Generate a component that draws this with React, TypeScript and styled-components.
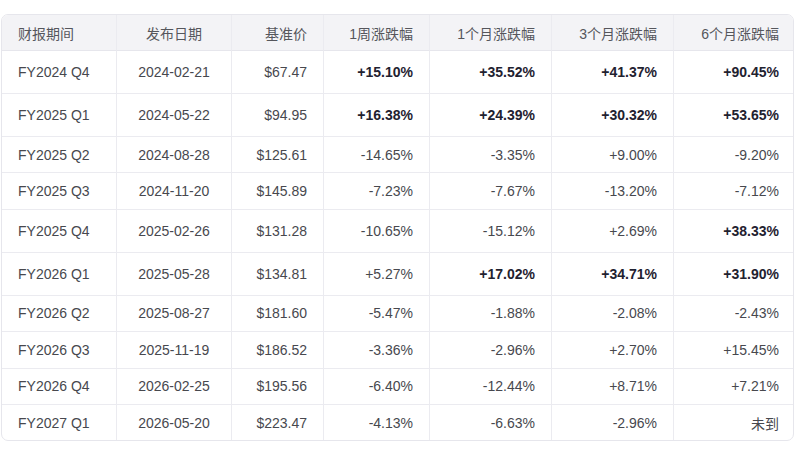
import React from 'react'
import styled, { createGlobalStyle } from 'styled-components'

const GlobalStyle = createGlobalStyle`
  html, body {
    margin: 0;
    padding: 0;
    background: #ffffff;
  }
  body {
    font-family: 'Liberation Sans', Arial, 'Noto Sans CJK SC', sans-serif;
  }
`

const Page = styled.div`
  padding: 14px 0 0 1px;
`

const Frame = styled.div`
  width: 793px;
  border: 1px solid #e6e6ec;
  border-radius: 7px;
  overflow: hidden;
  box-sizing: border-box;
`

const Table = styled.table`
  width: 100%;
  border-collapse: separate;
  border-spacing: 0;
  table-layout: fixed;
  font-size: 14px;
`

type Align = 'left' | 'center' | 'right'

const HeadCell = styled.th<{ $align: Align }>`
  height: 35px;
  padding: 0 16px;
  background: #f3f3f6;
  color: #55565c;
  font-weight: 400;
  text-align: ${(p) => p.$align};
  border-bottom: 1px solid #e6e6ec;
  border-right: 1px solid #ebebf0;
  white-space: nowrap;
  &:last-child {
    border-right: none;
  }
`

const Cell = styled.td<{ $align: Align; $tall: boolean; $last: boolean }>`
  height: ${(p) => (p.$tall ? '42px' : '35.4px')};
  padding: 0 16px;
  color: #47484e;
  text-align: ${(p) => p.$align};
  border-bottom: ${(p) => (p.$last ? 'none' : '1px solid #ebebf0')};
  border-right: 1px solid #ebebf0;
  white-space: nowrap;
  &:last-child {
    border-right: none;
  }
`

const Strong = styled.strong`
  font-weight: 700;
  color: #1f2230;
`

const widths = [115, 115, 92, 106, 122, 122, 121]
const aligns: Align[] = ['left', 'center', 'right', 'right', 'right', 'right', 'right']
const headers = ['财报期间', '发布日期', '基准价', '1周涨跌幅', '1个月涨跌幅', '3个月涨跌幅', '6个月涨跌幅']

// a leading "*" marks a bold value
const rows: string[][] = [
  ['FY2024 Q4', '2024-02-21', '$67.47', '*+15.10%', '*+35.52%', '*+41.37%', '*+90.45%'],
  ['FY2025 Q1', '2024-05-22', '$94.95', '*+16.38%', '*+24.39%', '*+30.32%', '*+53.65%'],
  ['FY2025 Q2', '2024-08-28', '$125.61', '-14.65%', '-3.35%', '+9.00%', '-9.20%'],
  ['FY2025 Q3', '2024-11-20', '$145.89', '-7.23%', '-7.67%', '-13.20%', '-7.12%'],
  ['FY2025 Q4', '2025-02-26', '$131.28', '-10.65%', '-15.12%', '+2.69%', '*+38.33%'],
  ['FY2026 Q1', '2025-05-28', '$134.81', '+5.27%', '*+17.02%', '*+34.71%', '*+31.90%'],
  ['FY2026 Q2', '2025-08-27', '$181.60', '-5.47%', '-1.88%', '-2.08%', '-2.43%'],
  ['FY2026 Q3', '2025-11-19', '$186.52', '-3.36%', '-2.96%', '+2.70%', '+15.45%'],
  ['FY2026 Q4', '2026-02-25', '$195.56', '-6.40%', '-12.44%', '+8.71%', '+7.21%'],
  ['FY2027 Q1', '2026-05-20', '$223.47', '-4.13%', '-6.63%', '-2.96%', '未到'],
]

const App = () => {
  return (
    <Page>
      <GlobalStyle />
      <Frame>
        <Table>
          <colgroup>
            {widths.map((w, i) => (
              <col key={i} style={{ width: w }} />
            ))}
          </colgroup>
          <thead>
            <tr>
              {headers.map((h, i) => (
                <HeadCell key={h} $align={aligns[i]}>
                  {h}
                </HeadCell>
              ))}
            </tr>
          </thead>
          <tbody>
            {rows.map((row, r) => {
              const tall = row.some((v) => v.startsWith('*'))
              return (
                <tr key={row[0]}>
                  {row.map((v, i) => (
                    <Cell key={i} $align={aligns[i]} $tall={tall} $last={r === rows.length - 1}>
                      {v.startsWith('*') ? <Strong>{v.slice(1)}</Strong> : v}
                    </Cell>
                  ))}
                </tr>
              )
            })}
          </tbody>
        </Table>
      </Frame>
    </Page>
  )
}

export default App
